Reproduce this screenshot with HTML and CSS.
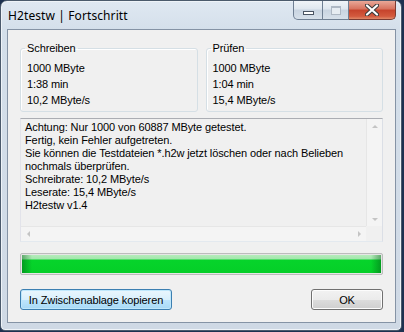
FILE: index.html
```html
<!DOCTYPE html>
<html lang="de">
<head>
  <meta charset="UTF-8">
  <title>H2testw | Fortschritt</title>
  <link rel="stylesheet" href="styles.css">
</head>
<body>

  <div class="window">
    <div class="titlebar">
      <span class="title">H2testw | Fortschritt</span>
      <div class="caption">
        <span class="cap min"><i></i></span>
        <span class="cap max"><i></i></span>
        <span class="cap close">
          <svg width="14" height="12" viewBox="0 0 14 12">
            <path d="M2 1.5 L12 10.5 M12 1.5 L2 10.5" stroke="#3b3b3b" stroke-width="4.2" stroke-linecap="round"/>
            <path d="M2 1.5 L12 10.5 M12 1.5 L2 10.5" stroke="#ffffff" stroke-width="2.2" stroke-linecap="round"/>
          </svg>
        </span>
      </div>
    </div>

    <div class="client">
      <div class="groups">
        <fieldset class="group">
          <legend>Schreiben</legend>
          <div>1000 MByte</div>
          <div>1:38 min</div>
          <div>10,2 MByte/s</div>
        </fieldset>
        <fieldset class="group">
          <legend>Prüfen</legend>
          <div>1000 MByte</div>
          <div>1:04 min</div>
          <div>15,4 MByte/s</div>
        </fieldset>
      </div>

      <div class="log">
        <div class="log-text">
          <div>Achtung: Nur 1000 von 60887 MByte getestet.</div>
          <div>Fertig, kein Fehler aufgetreten.</div>
          <div>Sie können die Testdateien *.h2w jetzt löschen oder nach Belieben</div>
          <div>nochmals überprüfen.</div>
          <div>Schreibrate: 10,2 MByte/s</div>
          <div>Leserate: 15,4 MByte/s</div>
          <div>H2testw v1.4</div>
        </div>
        <div class="vscroll">
          <span class="arrow up"></span>
          <span class="arrow down"></span>
        </div>
        <div class="hscroll">
          <span class="arrow left"></span>
          <span class="arrow right"></span>
        </div>
        <div class="corner"></div>
      </div>

      <div class="progress"><div class="fill"></div></div>

      <div class="buttons">
        <button class="btn default">In Zwischenablage kopieren</button>
        <button class="btn ok">OK</button>
      </div>
    </div>
  </div>

</body>
</html>
```

FILE: styles.css
```css
body {
  margin: 0;
  background-color: #1d3150;
  font-family: 'Liberation Sans', Arial, sans-serif;
  font-size: 11px;
  letter-spacing: -0.1px;
  color: #000000;
}
.window {
  width: 400px;
  height: 329px;
  border: 1px solid #4b5a6c;
  border-radius: 7px 7px 5px 5px;
  background: linear-gradient(to bottom, #dfe8f2 0px, #d4dfea 30px, #cfd9e5 100%);
  display: flex;
  flex-direction: column;
  box-shadow: inset 0 0 0 1px #eef3f8;
}
.titlebar {
  height: 28px;
  display: flex;
  justify-content: space-between;
  align-items: flex-start;
}
.title {
  font-family: 'Noto Sans', sans-serif;
  font-size: 12px;
  letter-spacing: 0.1px;
  margin: 6px 0 0 7px;
  color: #000000;
}
.caption {
  display: flex;
  margin-right: 5px;
  height: 19px;
}
.cap {
  display: flex;
  align-items: center;
  justify-content: center;
  height: 18px;
  border: 1px solid #6f7f93;
  border-top: none;
  background: linear-gradient(to bottom, #f0f4f8 0%, #dfe7ef 45%, #c9d4e1 50%, #d6e0ea 100%);
}
.cap.min {
  width: 28px;
  border-radius: 0 0 0 5px;
}
.cap.min i {
  width: 9px;
  height: 2px;
  margin-top: 5px;
  background: #ffffff;
  border: 1px solid #4a5463;
}
.cap.max {
  width: 25px;
  border-left: none;
}
.cap.max i {
  width: 8px;
  height: 6px;
  border: 1px solid #aeb8c4;
  border-top-width: 2px;
  background: #e6ecf2;
}
.cap.close {
  width: 46px;
  border-left: none;
  border-color: #7a3b32;
  border-radius: 0 0 5px 0;
  background: linear-gradient(to bottom, #e9a898 0%, #d7715d 45%, #c6432c 50%, #d35a3e 85%, #e08a6a 100%);
}

.client {
  flex: 1;
  margin: 0 5px 7px 6px;
  border: 1px solid #8593a5;
  background-color: #f0f0f0;
  padding: 12px 12px 0 12px;
  display: flex;
  flex-direction: column;
}
.groups {
  display: grid;
  grid-template-columns: 1fr 1fr;
  gap: 8px;
}
.group {
  margin: 0;
  padding: 5px 6px 3px 6px;
  border: 1px solid #d5dfe5;
  border-radius: 3px;
  box-shadow: inset 1px 1px 0 #ffffff;
}
.group legend {
  padding: 0 2px;
  margin-left: -2px;
  line-height: 13px;
}
.group div {
  line-height: 16px;
}

.log {
  margin-top: 6px;
  height: 124px;
  box-sizing: border-box;
  border: 1px solid #abadb3;
  border-left-color: #e2e3ea;
  border-right-color: #dbdfe6;
  border-bottom-color: #e3e9ef;
  display: grid;
  grid-template-columns: 1fr 16px;
  grid-template-rows: 1fr 15px;
}
.log-text {
  padding: 2px 0 0 4px;
  line-height: 13px;
  white-space: nowrap;
  overflow: hidden;
}
.vscroll {
  background: #f4f4f4;
  border-left: 1px solid #e6e6e6;
  display: flex;
  flex-direction: column;
  justify-content: space-between;
  align-items: center;
  padding: 6px 0 5px 0;
}
.hscroll {
  background: #f4f4f4;
  border-top: 1px solid #e6e6e6;
  display: flex;
  justify-content: space-between;
  align-items: center;
  padding: 0 5px 0 6px;
}
.corner {
  background: #f0f0f0;
}
.arrow {
  width: 0;
  height: 0;
  border: 3px solid transparent;
}
.arrow.up { border-bottom-color: #c4c4c4; border-top-width: 0; }
.arrow.down { border-top-color: #c4c4c4; border-bottom-width: 0; }
.arrow.left { border-right-color: #c4c4c4; border-left-width: 0; }
.arrow.right { border-left-color: #c4c4c4; border-right-width: 0; }

.progress {
  margin-top: 11px;
  height: 22px;
  box-sizing: border-box;
  border: 1px solid #bcbcbc;
  border-radius: 2px;
  padding: 1px;
  background: #e6e6e6;
}
.fill {
  height: 100%;
  background:
    linear-gradient(to right, rgba(0, 90, 20, 0.45) 0px, rgba(0, 90, 20, 0) 10px, rgba(0, 90, 20, 0) calc(100% - 10px), rgba(0, 90, 20, 0.45) 100%),
    linear-gradient(to bottom, #b5ecbb 0px, #a2e6ac 4px, #06d42b 5px, #05cf28 100%);
}

.buttons {
  margin-top: 14px;
  display: flex;
  justify-content: space-between;
}
.btn {
  height: 21px;
  padding: 0;
  font-family: inherit;
  font-size: 11px;
  letter-spacing: inherit;
  color: #000000;
  border-radius: 3px;
  border: 1px solid #707070;
  background: linear-gradient(to bottom, #f2f2f2 0%, #ebebeb 50%, #dddddd 51%, #cfcfcf 100%);
  box-shadow: inset 0 0 0 1px #fcfcfc;
}
.btn.default {
  width: 152px;
  border-color: #3c7fb1;
  background: linear-gradient(to bottom, #eaf6fd 0%, #d9f0fc 50%, #bee6fd 51%, #a7d9f5 100%);
  box-shadow: inset 0 0 0 1px #bfe7fb;
}
.btn.ok {
  width: 72px;
}
```
